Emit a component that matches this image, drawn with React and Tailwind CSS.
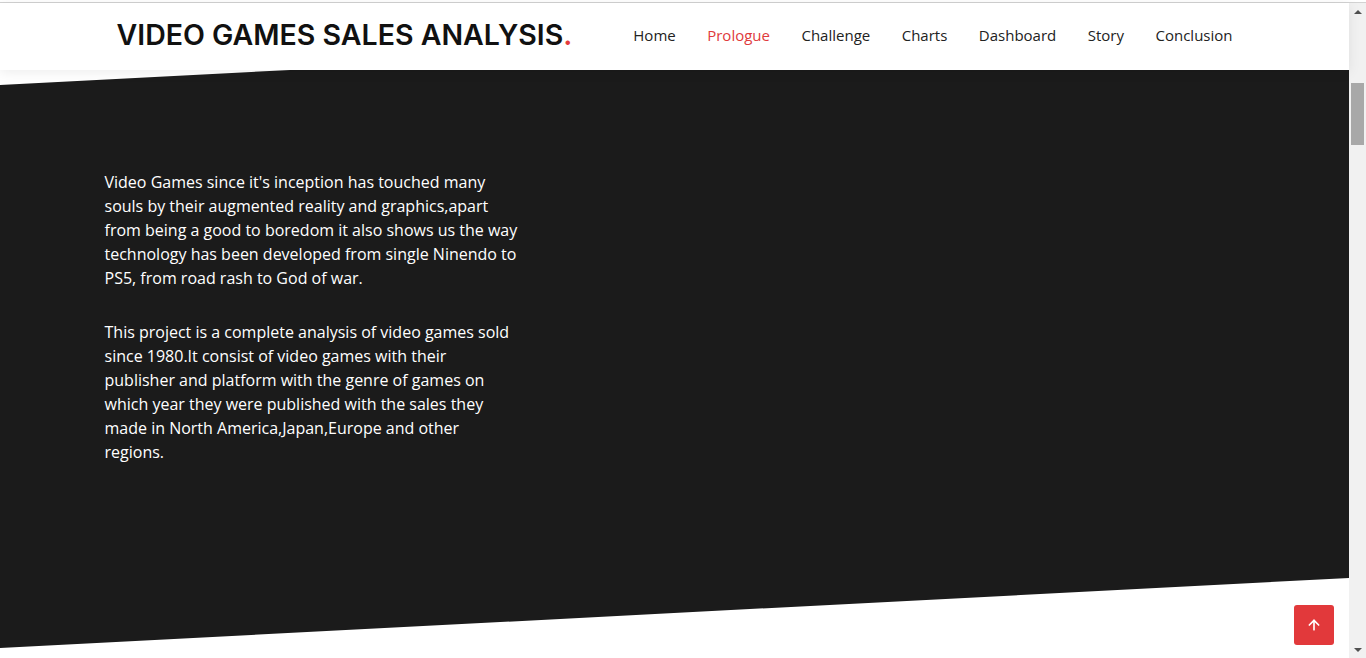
import { ArrowUp } from 'lucide-react';

const NAV = ['Home', 'Prologue', 'Challenge', 'Charts', 'Dashboard', 'Story', 'Conclusion'];

function Scrollbar() {
  return (
    <div className="w-[17px] shrink-0 bg-[#f1f1f1] flex flex-col items-center">
      <div className="h-[17px] w-full flex items-center justify-center">
        <div className="w-0 h-0 border-l-[4px] border-r-[4px] border-b-[4px] border-l-transparent border-r-transparent border-b-[#505050]" />
      </div>
      <div className="mt-[63px] w-[13px] h-[62px] bg-[#a8a8a8]" />
      <div className="flex-1" />
      <div className="h-[17px] w-full flex items-center justify-center">
        <div className="w-0 h-0 border-l-[4px] border-r-[4px] border-t-[4px] border-l-transparent border-r-transparent border-t-[#505050]" />
      </div>
    </div>
  );
}

export default function App() {
  return (
    <div className="w-[1366px] h-[658px] overflow-hidden bg-white flex flex-col">
      <div className="h-[2px] bg-white" />
      <div className="h-px bg-[#d2d2d2]" />
      <div className="flex flex-1 min-h-0">
        <div className="relative flex-1 flex flex-col">
          {/* header */}
          <header className="relative z-10 h-[67px] bg-white shadow-[0_2px_12px_rgba(0,0,0,0.08)]">
            <div className="mx-auto w-[1140px] h-full px-3 pb-[3px] flex items-center justify-between">
              <h1 className="text-[28.5px] leading-none font-semibold text-[#111] [font-family:Inter,'Liberation_Sans',sans-serif]">
                VIDEO GAMES SALES ANALYSIS<span className="text-[#e43c3c]">.</span>
              </h1>
              <nav className="flex items-center gap-[31.5px] text-[15px] [font-family:'Open_Sans',sans-serif] text-[#222]">
                {NAV.map((n) => (
                  <a key={n} className={n === 'Prologue' ? 'text-[#e03a3c]' : ''}>
                    {n}
                  </a>
                ))}
              </nav>
            </div>
          </header>

          {/* slanted dark section */}
          <section className="h-[578px] bg-[#1b1b1b] [clip-path:polygon(0_15px,290px_0,100%_0,100%_calc(100%-70px),0_100%)]">
            <div className="mx-auto w-[1140px] pt-[100px]">
              <div className="w-[415px] text-white text-[16px] leading-[24px] [font-family:'Open_Sans',sans-serif]">
                <p className="mb-[30px]">
                  Video Games since it's inception has touched many souls by their augmented reality and
                  graphics,apart from being a good to boredom it also shows us the way technology has been
                  developed from single Ninendo to PS5, from road rash to God of war.
                </p>
                <p>
                  This project is a complete analysis of video games sold since 1980.It consist of video games
                  with their publisher and platform with the genre of games on which year they were published
                  with the sales they made in North America,Japan,Europe and other regions.
                </p>
              </div>
            </div>
          </section>

          {/* back to top */}
          <button
            type="button"
            aria-label="Back to top"
            className="absolute right-[15px] bottom-[13px] w-10 h-10 rounded-[3px] bg-[#e2393b] flex items-center justify-center text-white"
          >
            <ArrowUp className="w-4 h-4" strokeWidth={2.5} />
          </button>
        </div>
        <Scrollbar />
      </div>
    </div>
  );
}
